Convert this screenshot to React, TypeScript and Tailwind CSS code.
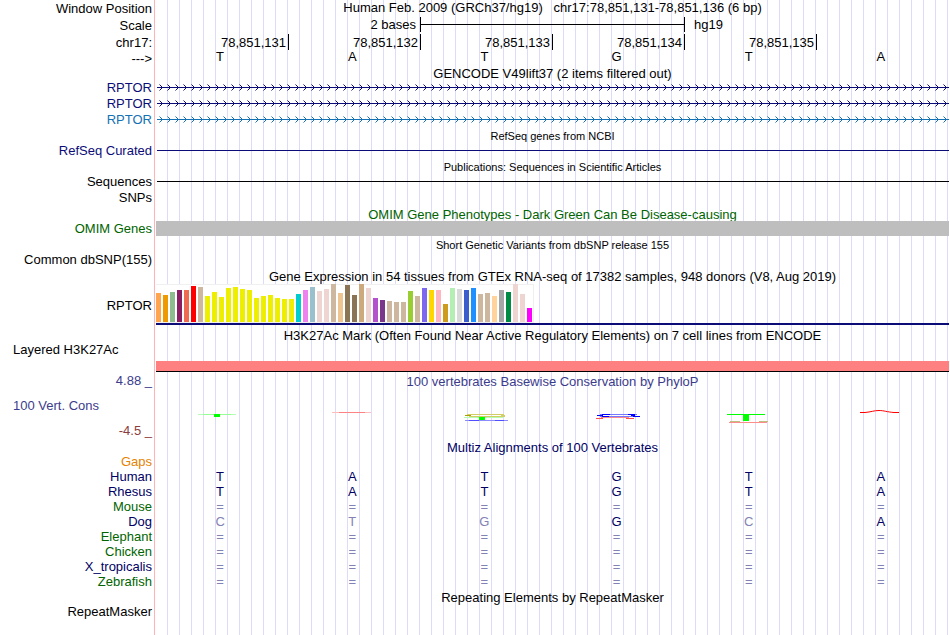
import type { ReactNode } from "react"
import clsx from "clsx"

const LABEL =
  "w-[156px] shrink-0 border-r border-white bg-white pr-[3px] text-right font-normal shadow-[inset_-1px_0_#ffb4b4]"

const positions = ["78,851,131", "78,851,132", "78,851,133", "78,851,134", "78,851,135"]
const bases = ["T", "A", "T", "G", "T", "A"]

const species = [
  { name: "Human", color: "text-[#000064]", row: "TATGTA" },
  { name: "Rhesus", color: "text-[#000064]", row: "TATGTA" },
  { name: "Mouse", color: "text-[#006400]", row: "======" },
  { name: "Dog", color: "text-[#000064]", row: "ctgGcA" },
  { name: "Elephant", color: "text-[#006400]", row: "======" },
  { name: "Chicken", color: "text-[#006400]", row: "======" },
  { name: "X_tropicalis", color: "text-[#000064]", row: "======" },
  { name: "Zebrafish", color: "text-[#006400]", row: "======" },
]

// [height, color] for every tissue
const tissues: [number, string][] = [
  [29, "#ffa54f"], [27, "#ee9a00"], [30, "#8fbc8f"], [32, "#8b1c62"], [32, "#ee6a50"], [36, "#ff0000"],
  [35, "#cdb79e"], [26, "#eeee00"], [30, "#eeee00"], [25, "#eeee00"], [34, "#eeee00"], [35, "#eeee00"],
  [33, "#eeee00"], [32, "#eeee00"], [24, "#eeee00"], [26, "#eeee00"], [27, "#eeee00"], [24, "#eeee00"],
  [23, "#eeee00"], [23, "#eeee00"], [28, "#00cdcd"], [32, "#ee82ee"], [35, "#9ac0cd"], [31, "#eed5d2"],
  [33, "#eed5d2"], [38, "#cdb79e"], [29, "#eec591"], [37, "#8b7355"], [27, "#8b7355"], [38, "#cdaa7d"],
  [34, "#eed5d2"], [24, "#b452cd"], [22, "#7a378b"], [21, "#cdb79e"], [20, "#cdb79e"], [20, "#cdb79e"],
  [31, "#9acd32"], [26, "#cdb79e"], [34, "#7b68ee"], [32, "#ffd700"], [32, "#ffb6c1"], [18, "#cd9b1d"],
  [34, "#b4eeb4"], [33, "#d9d9d9"], [32, "#3a5fcd"], [34, "#1e90ff"], [28, "#cdb79e"], [29, "#cdb79e"],
  [26, "#ffd39b"], [32, "#a6a6a6"], [30, "#008b45"], [38, "#eed5d2"], [28, "#eed5d2"], [14, "#ff00ff"],
]

type RowProps = {
  label?: string
  labelClass?: string
  className?: string
  children?: ReactNode
}

function Row({ label, labelClass, className, children }: RowProps) {
  return (
    <div className={clsx("flex", className)}>
      <div className={clsx(LABEL, labelClass)}>{label}</div>
      <div className="min-w-0 flex-1">{children}</div>
    </div>
  )
}

function Title({ small, className, children }: { small?: boolean; className?: string; children: ReactNode }) {
  return (
    <h2 className={clsx("overflow-hidden text-center whitespace-pre", small && "text-[11px]", className)}>
      {children}
    </h2>
  )
}

function Transcript({ id, color }: { id: string; color: string }) {
  return (
    <svg className="block h-4 w-full" shapeRendering="crispEdges" aria-hidden="true">
      <defs>
        <pattern id={id} width="8" height="16" patternUnits="userSpaceOnUse">
          <path d="M3 4h1v1h-1zM3 10h1v1h-1z" fill={color} fillOpacity="0.5" />
          <path d="M4 5h1v1h-1zM5 6h1v1h-1zM6 7h1v1h-1zM5 8h1v1h-1zM4 9h1v1h-1z" fill={color} />
        </pattern>
      </defs>
      <rect width="100%" height="16" fill={`url(#${id})`} />
      <rect x="1" y="7" width="100%" height="1" fill={color} />
    </svg>
  )
}

function Expression() {
  return (
    <svg className="block h-[39px] w-[378px]" shapeRendering="crispEdges" role="img" aria-label="GTEx expression">
      <rect width="378" height="39" fill="#fff" />
      <path d="M0 0.5H377.5V38.5H0" fill="none" stroke="#f0f0f0" />
      {tissues.map(([h, color], i) => (
        <rect key={i} x={i * 7} y={38 - h} width="5" height={h} fill={color} />
      ))}
    </svg>
  )
}

// conservation logos, one for each base
const logos: ReactNode[] = [
  <>
    <path d="M41 25.5H79" stroke="#b4ffb4" />
    <path d="M46 25.5H74" stroke="#96ff96" />
    <rect x="57" y="25" width="6" height="3" fill="#00ff00" />
  </>,
  <>
    <path d="M43 23.5H82" stroke="#ffbebe" />
    <path d="M50 23.5H76" stroke="#ff8282" />
  </>,
  <>
    <path d="M43 28.5H82" stroke="#b4ffb4" />
    <path d="M46 25.5H83M48 27.5H84" stroke="#d2cd64" />
    <path d="M44 26.5H50" stroke="#aaa000" />
    <path d="M80 26.5H84" stroke="#d2cd64" />
    <rect x="58" y="28" width="6" height="3" fill="#00ff00" />
    <path d="M44 31.5H87" stroke="#8c8cff" />
    <path d="M48 31.5H58M74 31.5H83" stroke="#5050ff" />
  </>,
  <>
    <path d="M47 25.5H84M47 27.5H80" stroke="#7878ff" />
    <path d="M49 25.5H57M75 25.5H82M49 27.5H56M44 26.5H50M80 27.5H87M78 26.5H82" stroke="#0000ff" />
    <path d="M43 29.5H50M73 29.5H81" stroke="#ff5050" />
    <path d="M48 28.5H76" stroke="#ff8c8c" />
  </>,
  <>
    <path d="M42 25.5H80" stroke="#00ff00" />
    <rect x="58" y="25" width="6" height="7" fill="#00ff00" />
    <path d="M45 32.5H55M74 32.5H83" stroke="#bebe82" />
    <path d="M44 33.5H82" stroke="#ff8c8c" />
  </>,
  <path
    d="M43 23.5H48C54 23 57 21.5 62 21.5S70 23 77 23.5H82"
    fill="none"
    stroke="#ff0000"
    shapeRendering="geometricPrecision"
  />,
]

function App() {
  return (
    <main className="flex min-h-screen flex-col bg-[linear-gradient(to_right,transparent_11px,#dcdcfa_11px)] bg-[length:12px_100%] pr-px font-['Liberation_Sans',Arial,sans-serif] text-[13px] leading-[15px] text-black">
      <Row label="Window Position" className="h-[17px]" labelClass="pt-px">
        <h1 className="text-center whitespace-pre">
          Human Feb. 2009 (GRCh37/hg19)   chr17:78,851,131-78,851,136 (6 bp)
        </h1>
      </Row>
      <Row label="Scale" className="h-[17px]" labelClass="pt-px">
        <div className="ml-px grid h-[15px] grid-cols-6">
          <span className="col-span-2 pr-[5px] text-right">2 bases</span>
          <span className="col-span-2 -ml-px flex items-center border-x border-black">
            <span className="h-px flex-1 bg-black" />
          </span>
          <span className="col-span-2 pl-[9px]">hg19</span>
        </div>
      </Row>
      <Row label="chr17:" className="h-[15px]" labelClass="pt-px">
        <div className="ml-px grid h-[15px] grid-cols-6">
          {positions.map((p) => (
            <span key={p} className="border-r border-black pt-px pr-[2px] text-right">
              {p}
            </span>
          ))}
        </div>
      </Row>
      <Row label="--->" className="h-[17px]" labelClass="pt-[2px]">
        <div className="grid grid-cols-6 text-center">
          {bases.map((b, i) => (
            <span key={i} className="pr-1">
              {b}
            </span>
          ))}
        </div>
      </Row>

      <Row className="h-[14px]">
        <Title>GENCODE V49lift37 (2 items filtered out)</Title>
      </Row>
      <Row label="RPTOR" labelClass="text-[#0c0c78]">
        <Transcript id="tx1" color="#0c0c78" />
      </Row>
      <Row label="RPTOR" labelClass="text-[#0c0c78]">
        <Transcript id="tx2" color="#0c0c78" />
      </Row>
      <Row label="RPTOR" labelClass="text-[#1471b4]">
        <Transcript id="tx3" color="#1471b4" />
      </Row>

      <Row className="h-[15px]">
        <Title small className="pt-px">RefSeq genes from NCBI</Title>
      </Row>
      <Row label="RefSeq Curated" className="h-[15px]" labelClass="text-[#0c0c78]">
        <div className="mt-[7px] ml-px h-px bg-[#0c0c78]" />
      </Row>

      <Row className="h-4">
        <Title small className="pt-[2px]">Publications: Sequences in Scientific Articles</Title>
      </Row>
      <Row label="Sequences" className="h-[15px]">
        <div className="mt-[7px] ml-px h-px bg-black" />
      </Row>
      <Row label="SNPs" className="h-[17px]" labelClass="pt-px" />

      <Row className="h-[15px]">
        <Title className="h-[15px] pt-px text-[#006400]">
          OMIM Gene Phenotypes - Dark Green Can Be Disease-causing
        </Title>
      </Row>
      <Row label="OMIM Genes" labelClass="text-[#006400]">
        <div className="h-[15px] bg-[#bebebe]" />
      </Row>

      <Row className="h-4">
        <Title small className="pt-[2px]">Short Genetic Variants from dbSNP release 155</Title>
      </Row>
      <Row label="Common dbSNP(155)" className="h-[17px]" />

      <Row className="h-[15px]">
        <Title>Gene Expression in 54 tissues from GTEx RNA-seq of 17382 samples, 948 donors (V8, Aug 2019)</Title>
      </Row>
      <Row label="RPTOR" labelClass="flex items-center justify-end pt-[2px]">
        <Expression />
        <div className="h-[2px] bg-[#0c0c78]" />
      </Row>

      <Row className="h-[17px]">
        <Title className="pt-[3px]">
          H3K27Ac Mark (Often Found Near Active Regulatory Elements) on 7 cell lines from ENCODE
        </Title>
      </Row>
      <Row label="Layered H3K27Ac" className="h-[30px]" labelClass="pl-[13px] !text-left">
        <div className="mt-[19px] h-[11px] border-b border-black bg-[#ff8080]" />
      </Row>

      <Row label="4.88 _" className="h-[17px]" labelClass="pt-px text-[#3c3c8c]">
        <Title className="pt-[2px] text-[#3c3c8c]">100 vertebrates Basewise Conservation by PhyloP</Title>
      </Row>
      <Row label="100 Vert. Cons" className="h-[34px]" labelClass="pt-[9px] pl-[13px] !text-left text-[#3c3c8c]">
        <div className="ml-px grid grid-cols-6">
          {logos.map((logo, i) => (
            <svg key={i} className="h-[34px] w-[132px]" shapeRendering="crispEdges" aria-hidden="true">
              {logo}
            </svg>
          ))}
        </div>
      </Row>
      <Row label="-4.5 _" className="h-[17px]" labelClass="text-[#8c3c3c]" />

      <Row className="h-[14px]">
        <Title className="text-[#000064]">Multiz Alignments of 100 Vertebrates</Title>
      </Row>
      <Row label="Gaps" className="h-[15px]" labelClass="text-[#e68200]" />
      <table className="w-full table-fixed border-separate border-spacing-0">
        <tbody>
          {species.map(({ name, color, row }) => (
            <tr key={name} className="h-[15px]">
              <th scope="row" className={clsx(LABEL, "py-0 pl-0", color)}>
                {name}
              </th>
              {row.split("").map((c, i) => (
                <td
                  key={i}
                  className={clsx(
                    "py-0 pr-1 pl-0 text-center uppercase",
                    c === c.toUpperCase() && c !== "=" ? "text-[#000064]" : "text-[#8282b4]",
                  )}
                >
                  {c}
                </td>
              ))}
            </tr>
          ))}
        </tbody>
      </table>

      <Row className="h-[15px]">
        <Title className="pt-px">Repeating Elements by RepeatMasker</Title>
      </Row>
      <Row label="RepeatMasker" className="flex-1" />
    </main>
  )
}

export default App
